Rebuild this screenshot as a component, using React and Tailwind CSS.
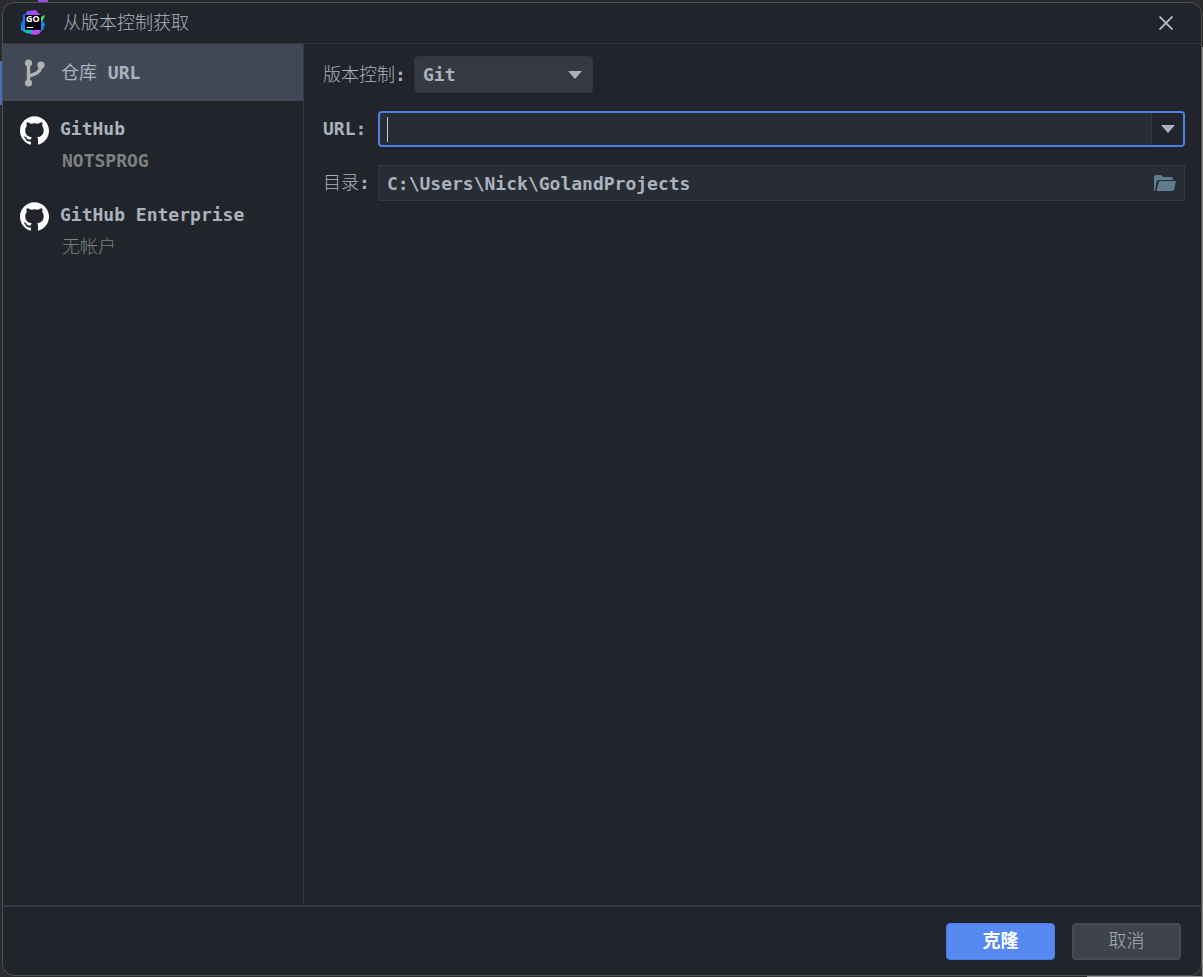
import React, { useState } from 'react';
import { SiGithub } from 'react-icons/si';

// --- CONTAS ---
const accounts = [
  { id: 'github', label: 'GitHub', detail: 'NOTSPROG' },
  { id: 'enterprise', label: 'GitHub Enterprise', detail: '无帐户' }
];

function GoLandLogo() {
  return (
    <svg viewBox="0 0 26 26" className="w-[26px] h-[26px]" aria-hidden="true">
      <defs>
        <linearGradient id="goTop" x1="0" y1="0" x2="1" y2="0">
          <stop offset="0" stopColor="#5b5cf6" />
          <stop offset="0.5" stopColor="#a64dff" />
          <stop offset="1" stopColor="#8a4cf5" />
        </linearGradient>
        <linearGradient id="goLeft" x1="0" y1="0" x2="0" y2="1">
          <stop offset="0" stopColor="#3d62f7" />
          <stop offset="0.6" stopColor="#087cfa" />
          <stop offset="1" stopColor="#12b5d6" />
        </linearGradient>
      </defs>
      <path d="M7 1 16 0l2 3 3 2v4H5V5Z" fill="url(#goTop)" />
      <path d="M7 3 3 5l0 5-2 3v7l5 3 2-3V3Z" fill="url(#goLeft)" />
      <path d="M5 19h10l-4 5-5-1Z" fill="#07c3b2" />
      <path d="m10 24 4-5h6l2 1-3 4-4 1Z" fill="#b74af7" />
      <path d="m19 8 6-3-1 3-3 5h-2Z" fill="#3bea62" />
      <path d="m20 11 2-1 3 4-2 6-3 1Z" fill="#1a8bf5" />
      <rect x="5" y="5" width="16" height="15" fill="#000" />
      <text x="6" y="12" fontFamily="Open Sans, sans-serif" fontSize="9" fontWeight="700" fill="#fff">GO</text>
      <rect x="7" y="17" width="6" height="1" fill="#fff" />
    </svg>
  );
}

function BranchIcon() {
  return (
    <svg viewBox="0 0 22 28" className="w-[22px] h-[28px] shrink-0" fill="none" aria-hidden="true">
      <path d="M5.500 4v20M18 6c0 6.500-4 9-12.500 11" stroke="#afb1b3" strokeWidth="3.4" />
      <circle cx="5.500" cy="4" r="3.6" fill="#afb1b3" />
      <circle cx="18" cy="6" r="3.6" fill="#afb1b3" />
      <circle cx="5.500" cy="24" r="3.6" fill="#afb1b3" />
    </svg>
  );
}

function FolderIcon() {
  return (
    <svg viewBox="0 0 22 16" className="w-[22px] h-4" fill="#607d8b" aria-hidden="true">
      <path d="M0 15V2Q0 0 2 0h5l2 2h8q2 0 2 2v1H4.500Q3 5 2.700 6.500L1 16Q0 16 0 15Z" />
      <path d="M5 6h17l-2 8.500Q19.600 16 18 16H2.500Z" />
    </svg>
  );
}

function Arrow() {
  return (
    <svg viewBox="0 0 14 8" className="w-3.5 h-2" fill="#a9b2c3" aria-hidden="true">
      <path d="M0 0h14L7 8Z" />
    </svg>
  );
}

function App() {
  const [url, setUrl] = useState('');
  const [directory, setDirectory] = useState('C:\\Users\\Nick\\GolandProjects');

  return (
    <div className="min-h-screen flex flex-col bg-[#2b2b2d] font-['DejaVu_Sans_Mono','Noto_Sans_CJK_SC',monospace] text-lg leading-6 font-bold text-[#abb2bf]">
      {/* --- BORDAS DO EDITOR AO FUNDO --- */}
      <div className="h-0.5 shrink-0 flex pl-[38px]">
        <span className="w-2.5 bg-[#9a48e0]"></span>
      </div>
      <div className="flex-1 flex">
        <div className="w-0.5 shrink-0 pt-[59px]">
          <div className="h-11 bg-[#4a6cb4]"></div>
        </div>
        <main className="flex-1 min-w-0 flex flex-col bg-[#21252b] border border-[#4d4e50] rounded-xl overflow-hidden">
          <header className="h-[41px] shrink-0 flex items-center pl-[17px] pr-7 border-b border-[#323844]">
            <GoLandLogo />
            <h1 className="ml-[17px] flex-1 font-light">从版本控制获取</h1>
            <button aria-label="关闭" className="p-0">
              <svg viewBox="0 0 14 14" className="w-3.5 h-3.5" stroke="#b4c1c4" strokeWidth="1.8" aria-hidden="true">
                <path d="M.5.5l13 13M13.500.5l-13 13" />
              </svg>
            </button>
          </header>

          <div className="flex-1 flex">
            {/* --- MENU LATERAL --- */}
            <nav className="w-[301px] shrink-0 border-r border-[#323844]">
              <button className="w-full h-[57px] flex items-center pl-5 bg-[#414855] text-left">
                <BranchIcon />
                <span className="ml-4"><span className="font-normal">仓库</span> URL</span>
              </button>
              {accounts.map((account) => (
                <button key={account.id} className="w-full h-[86px] flex items-start pt-[15px] pl-[17px] text-left">
                  <SiGithub size={29} className="shrink-0 text-white" />
                  <span className="ml-[11px] mt-px flex flex-col gap-2">
                    <span>{account.label}</span>
                    <span className={account.id === 'github' ? 'pl-0.5 text-[#7f8080]' : 'pl-0.5 font-light text-[#7f8080]'}>
                      {account.detail}
                    </span>
                  </span>
                </button>
              ))}
            </nav>

            {/* --- FORMULÁRIO --- */}
            <form className="flex-1 min-w-0 flex flex-col pt-3 pl-[19px] pr-4">
              <div className="flex items-center h-[37px]">
                <label htmlFor="vcs" className="w-[91px] whitespace-nowrap"><span className="font-light">版本控制</span>:</label>
                <div className="relative">
                  <select id="vcs" className="appearance-none w-[179px] h-[37px] pl-2 rounded bg-[#353a42] border border-[#30353d] outline-none">
                    <option>Git</option>
                  </select>
                  <span className="absolute right-[11px] top-[15px] pointer-events-none"><Arrow /></span>
                </div>
              </div>

              <div className="flex items-center mt-[18px]">
                <label htmlFor="url" className="w-[55px] shrink-0">URL:</label>
                <div className="flex-1 flex h-9 rounded border-2 border-[#4f7fe0] bg-[#282c34] overflow-hidden">
                  <span className="self-center ml-[7px] w-px h-[25px] bg-[#c8ccd4]"></span>
                  <input
                    id="url"
                    value={url}
                    onChange={(e) => setUrl(e.target.value)}
                    className="flex-1 min-w-0 bg-transparent outline-none caret-transparent"
                  />
                  <button type="button" aria-label="历史记录" className="w-8 flex items-center justify-center bg-[#21252b] border-l border-[#323844]">
                    <Arrow />
                  </button>
                </div>
              </div>

              <div className="flex items-center mt-[18px]">
                <label htmlFor="directory" className="w-[55px] shrink-0 whitespace-nowrap"><span className="font-light">目录</span>:</label>
                <div className="flex-1 flex items-center h-9 bg-[#282c34] border border-[#323844]">
                  <input
                    id="directory"
                    value={directory}
                    onChange={(e) => setDirectory(e.target.value)}
                    className="flex-1 min-w-0 h-full pl-2 bg-transparent outline-none"
                  />
                  <button type="button" aria-label="浏览" className="mr-2">
                    <FolderIcon />
                  </button>
                </div>
              </div>
            </form>
          </div>

          <footer className="h-[70px] shrink-0 flex items-center justify-end gap-[17px] pr-5 border-t-2 border-[#323844]">
            <button className="w-[109px] h-[37px] rounded bg-[#568af2] border border-[#4a7be0] text-white">克隆</button>
            <button className="w-[109px] h-[37px] rounded bg-[#3d424b] border-2 border-[#464c57] font-light">取消</button>
          </footer>
        </main>
        <div className="w-px shrink-0 pt-[45px] flex flex-col">
          <div className="flex-1 bg-[#929292]"></div>
        </div>
      </div>
      <div className="h-px shrink-0 flex justify-end">
        <span className="w-[116px] bg-[#929292]"></span>
      </div>
    </div>
  );
}

export default App;
